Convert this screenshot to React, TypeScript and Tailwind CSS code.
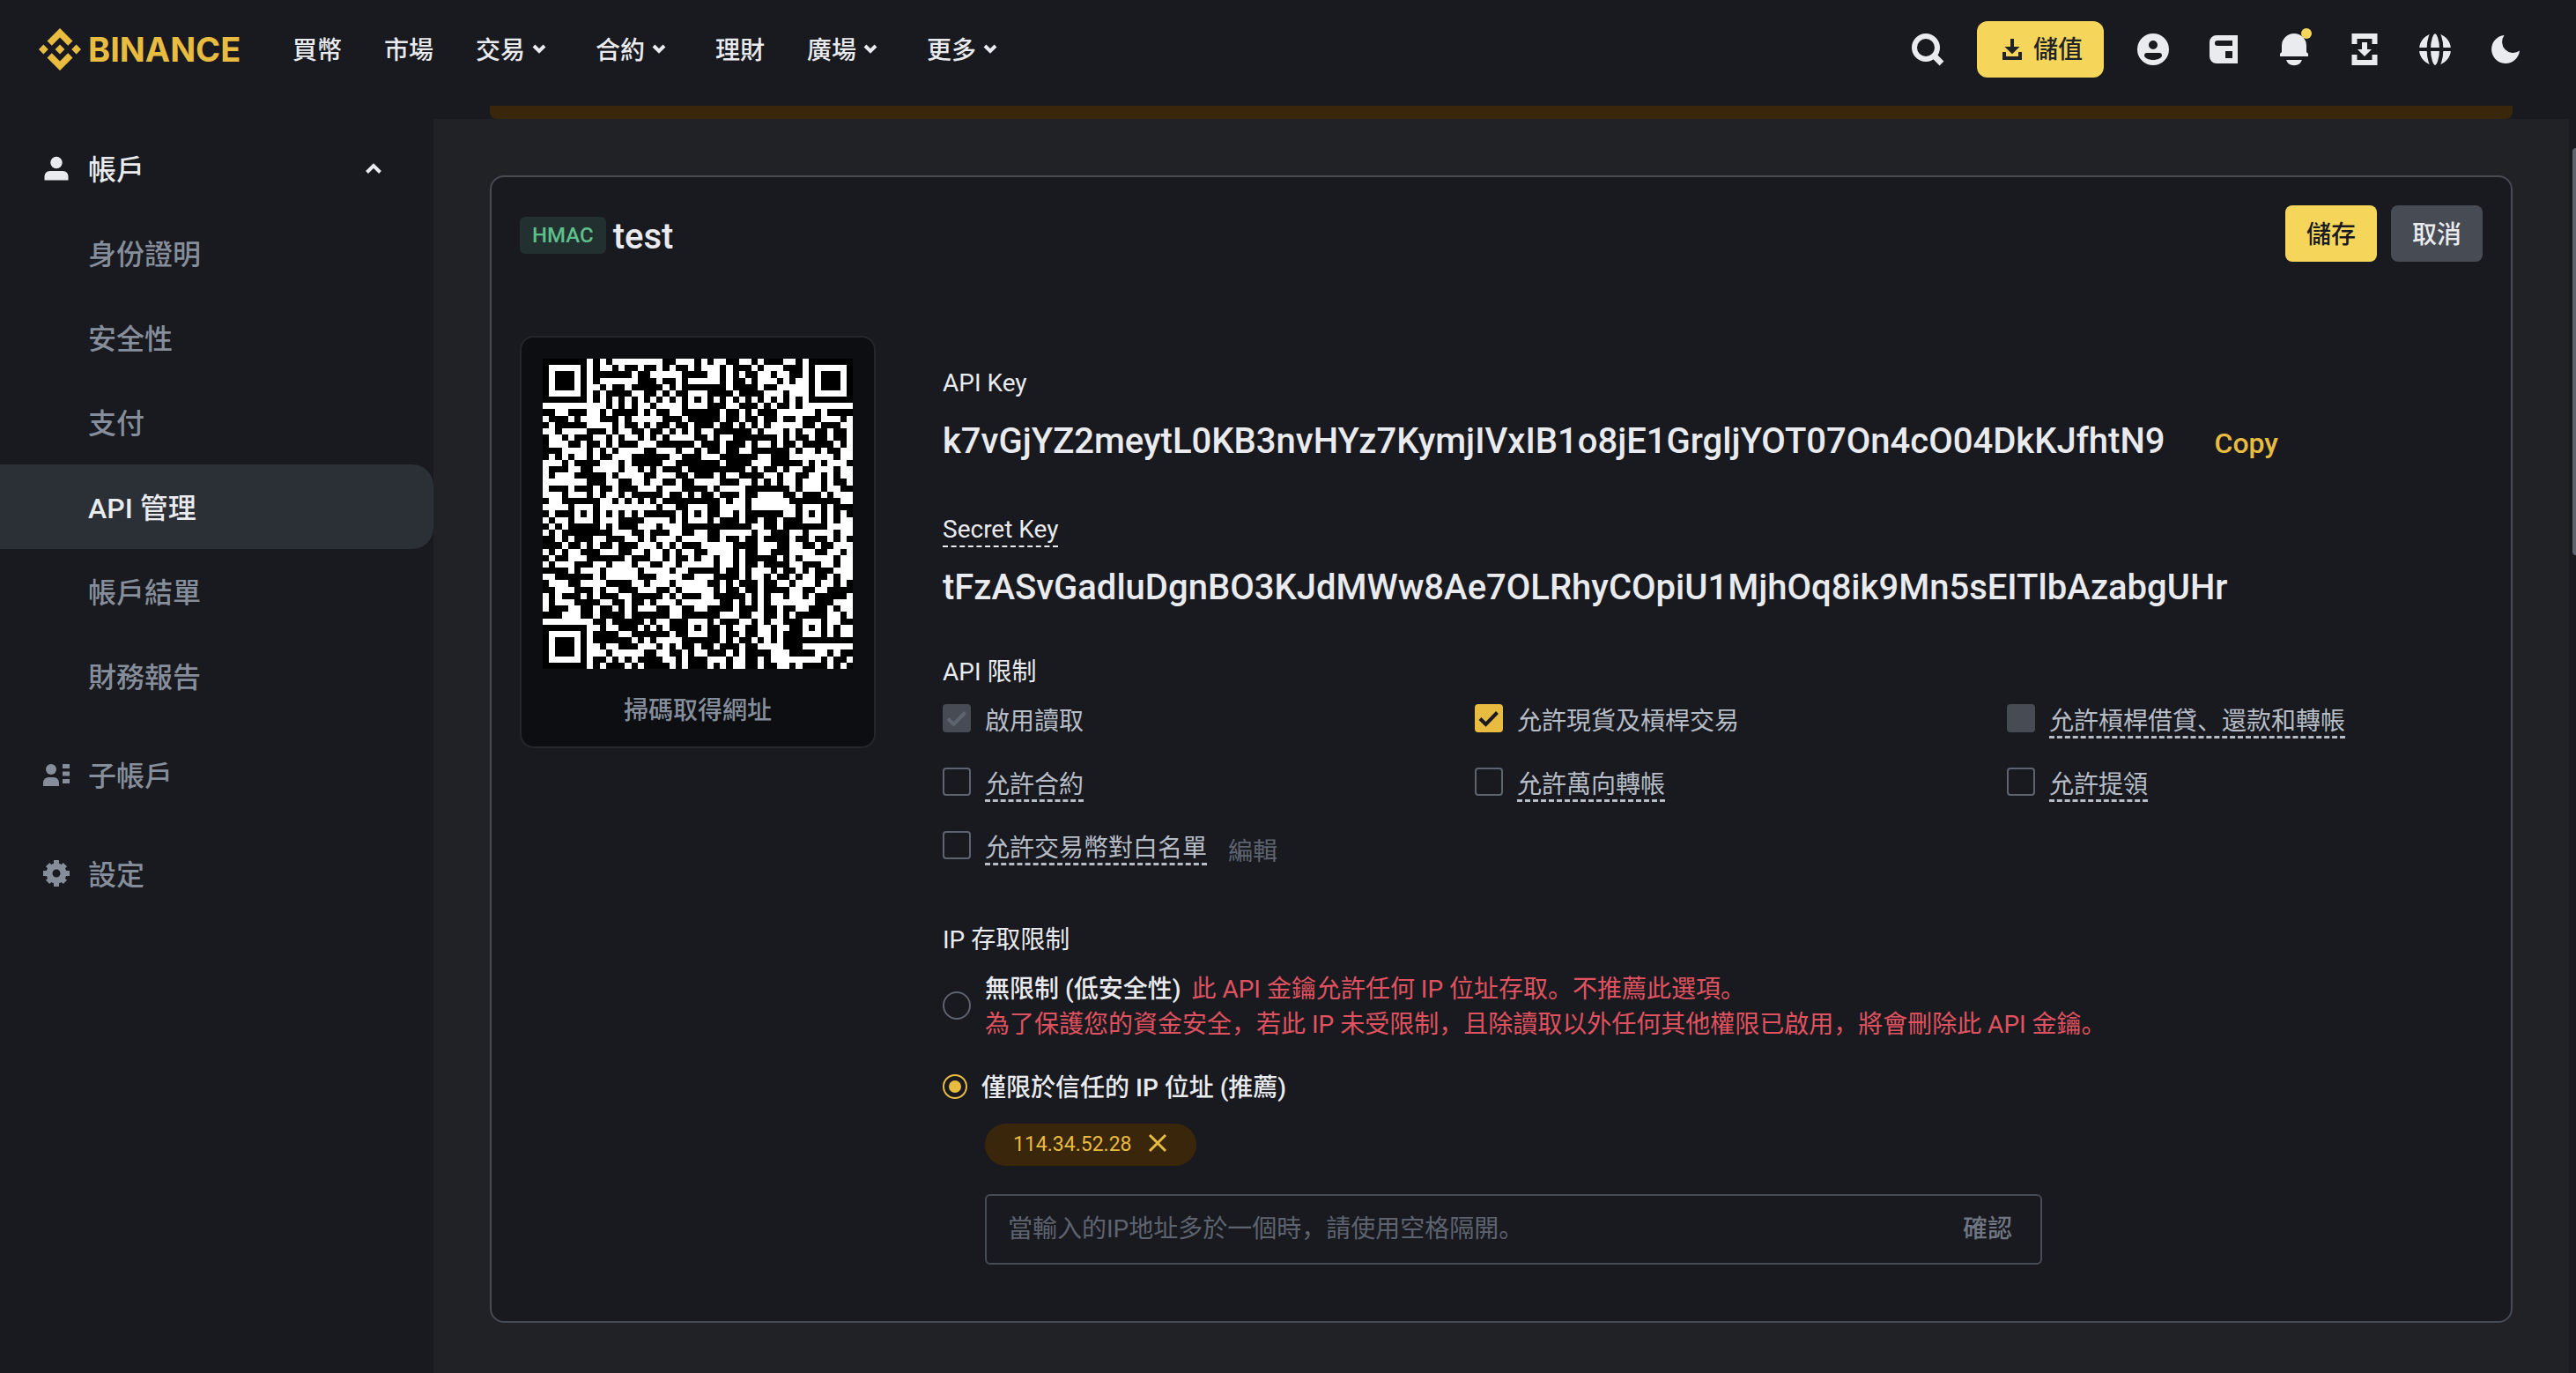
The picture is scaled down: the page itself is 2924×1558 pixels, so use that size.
import React from "react";

/* Each row lists the columns where the module colour flips, starting from black. */
const QR_SIZE = 49;
const QR_ROWS: number[][] = [
  [7, 8, 9, 10, 11, 19, 21, 24, 25, 26, 27, 29, 31, 33, 34, 35, 38, 40, 41, 42],
  [7, 8, 9, 11, 12, 13, 15, 16, 18, 19, 20, 21, 23, 24, 25, 28, 29, 30, 33, 34, 35, 38, 41, 42],
  [7, 8, 14, 15, 17, 22, 26, 28, 29, 30, 31, 32, 34, 36, 37, 39, 41, 42],
  [7, 8, 9, 15, 18, 19, 21, 22, 23, 28, 29, 30, 32, 33, 34, 37, 38, 39, 40, 42],
  [7, 9, 10, 11, 13, 14, 19, 20, 21, 22, 29, 30, 34, 35, 37, 42],
  [7, 8, 9, 10, 14, 16, 18, 19, 20, 21, 23, 26, 30, 31, 35, 38, 39, 42],
  [7, 8, 9, 10, 11, 12, 13, 14, 15, 16, 17, 18, 19, 20, 21, 22, 23, 24, 25, 26, 27, 28, 29, 30, 31, 32, 33, 34, 35, 36, 37, 38, 39, 40, 41, 42],
  [0, 10, 11, 12, 13, 14, 15, 17, 18, 22, 23, 26, 29, 31, 34, 35, 36, 37, 39, 40, 41, 49],
  [2, 4, 7, 9, 10, 11, 15, 16, 17, 18, 20, 22, 28, 29, 31, 32, 33, 34, 37, 43, 44, 45],
  [0, 1, 4, 5, 6, 9, 12, 13, 14, 19, 22, 23, 28, 29, 31, 32, 34, 35, 37, 38, 40, 41, 44, 47, 48, 49],
  [1, 2, 7, 11, 12, 13, 15, 16, 17, 18, 20, 21, 23, 24, 27, 28, 30, 31, 32, 33, 34, 35, 36, 41, 43, 44, 47, 49],
  [0, 2, 3, 7, 10, 11, 12, 14, 16, 17, 19, 20, 21, 22, 23, 24, 25, 27, 33, 34, 35, 38, 39, 40, 41, 43, 45, 46, 48, 49],
  [1, 3, 4, 5, 8, 10, 11, 12, 13, 15, 16, 17, 18, 19, 20, 24, 26, 27, 28, 30, 37, 38, 39, 40, 42, 43, 45, 46, 48, 49],
  [1, 4, 6, 7, 9, 10, 11, 12, 15, 18, 24, 25, 28, 29, 32, 33, 34, 36, 37, 38, 40, 41, 46, 47, 48, 49],
  [3, 7, 8, 9, 10, 11, 12, 16, 18, 21, 22, 24, 25, 26, 28, 29, 31, 33, 39, 40, 41, 43, 44, 45, 47, 49],
  [1, 2, 3, 4, 5, 7, 8, 9, 11, 14, 20, 22, 25, 28, 34, 36, 39, 46, 47, 49],
  [0, 3, 4, 5, 9, 12, 13, 14, 19, 21, 28, 29, 33, 36, 41, 42, 43, 44, 45, 48],
  [0, 1, 4, 6, 8, 12, 13, 15, 16, 17, 18, 19, 22, 23, 32, 33, 34, 35, 37, 38, 39, 41, 43, 46, 47, 49],
  [0, 1, 2, 5, 10, 11, 12, 16, 18, 21, 23, 24, 27, 28, 29, 31, 35, 37, 38, 40, 42, 44, 45, 46, 47, 49],
  [0, 7, 10, 12, 14, 16, 17, 19, 21, 22, 24, 28, 31, 33, 34, 35, 36, 37, 38, 40, 41, 44, 45, 46, 48, 49],
  [0, 1, 4, 5, 8, 9, 11, 12, 15, 18, 19, 22, 26, 27, 28, 32, 39, 40, 41, 44, 45, 47],
  [0, 3, 4, 7, 8, 9, 10, 12, 13, 14, 19, 20, 22, 23, 24, 25, 27, 28, 31, 32, 34, 38, 40, 41, 44, 45, 46, 49],
  [1, 3, 9, 11, 12, 13, 14, 15, 16, 17, 18, 19, 28, 29, 30, 32, 33, 39, 47, 49],
  [0, 4, 5, 8, 9, 18, 19, 21, 23, 26, 28, 32, 33, 40, 41, 44, 45, 46],
  [1, 2, 5, 6, 7, 8, 9, 10, 11, 12, 13, 14, 15, 16, 21, 22, 23, 24, 25, 26, 28, 30, 31, 32, 38, 40, 41, 42, 43, 44, 45, 46, 47, 48],
  [0, 1, 2, 4, 5, 8, 9, 12, 16, 20, 21, 22, 23, 26, 27, 28, 31, 32, 34, 35, 37, 38, 41, 44, 45, 46, 47, 49],
  [1, 2, 3, 4, 9, 10, 11, 12, 15, 18, 19, 22, 33, 35, 37, 38, 45, 49],
  [0, 1, 2, 3, 11, 14, 16, 17, 20, 22, 24, 26, 28, 33, 34, 36, 39, 41, 42, 46, 47, 49],
  [2, 3, 4, 5, 8, 10, 13, 15, 16, 17, 18, 21, 22, 26, 28, 29, 31, 32, 34, 35, 39, 40, 42, 43, 45, 46, 47, 48],
  [3, 4, 6, 7, 8, 9, 11, 12, 15, 18, 19, 20, 21, 22, 25, 30, 34, 37, 39, 41, 43, 44, 46, 49],
  [0, 1, 2, 3, 4, 6, 9, 12, 14, 16, 17, 19, 20, 21, 22, 24, 26, 30, 31, 32, 34, 36, 39, 43, 45, 47, 48, 49],
  [1, 2, 4, 7, 13, 14, 17, 19, 20, 21, 23, 24, 25, 27, 28, 30, 31, 32, 37, 38, 39, 40, 41, 46, 47, 49],
  [0, 1, 2, 5, 8, 10, 11, 14, 15, 17, 19, 21, 22, 27, 28, 30, 31, 32, 34, 35, 39, 41, 44, 46, 47, 49],
  [4, 5, 6, 9, 10, 15, 16, 20, 21, 23, 28, 29, 31, 32, 33, 36, 37, 38, 40, 41, 42, 43, 46, 49],
  [0, 2, 8, 9, 10, 15, 18, 22, 24, 27, 31, 32, 33, 35, 36, 37, 39, 40, 41, 43, 45, 46, 47, 49],
  [1, 4, 6, 10, 14, 16, 17, 20, 21, 26, 28, 29, 30, 31, 34, 35, 37, 39, 40, 43, 44, 46, 47, 48],
  [2, 5, 8, 9, 10, 12, 15, 18, 20, 21, 22, 27, 28, 29, 31, 32, 34, 35, 39, 41, 43, 45],
  [0, 1, 2, 3, 6, 7, 8, 9, 12, 14, 19, 20, 21, 22, 25, 27, 32, 33, 34, 35, 36, 38, 39, 41, 42, 43, 48, 49],
  [0, 1, 2, 5, 9, 11, 13, 14, 16, 17, 18, 21, 22, 28, 30, 31, 32, 33, 34, 35, 36, 43, 46, 49],
  [0, 1, 4, 6, 8, 9, 11, 12, 13, 14, 15, 18, 20, 22, 24, 26, 30, 31, 34, 35, 37, 38, 40, 42, 45, 46, 47, 49],
  [3, 6, 8, 9, 13, 14, 20, 22, 28, 31, 33, 35, 37, 38, 39, 40, 45, 47, 48, 49],
  [0, 8, 10, 11, 16, 17, 18, 20, 23, 26, 27, 28, 31, 33, 34, 35, 36, 38, 41, 44, 45, 47],
  [7, 9, 10, 12, 15, 16, 17, 18, 19, 20, 23, 24, 25, 26, 28, 29, 30, 32, 34, 36, 37, 39, 41, 42, 43, 44, 45, 46, 47, 49],
  [7, 8, 12, 14, 20, 21, 23, 26, 28, 29, 31, 32, 34, 36, 37, 38, 41, 44, 45, 46, 47, 49],
  [7, 8, 14, 15, 16, 17, 18, 22, 28, 29, 30, 31, 33, 34, 35, 36, 37, 38],
  [7, 9, 10, 12, 15, 18, 19, 20, 21, 22, 24, 25, 27, 28, 31, 32, 34, 38, 41, 49],
  [7, 10, 11, 16, 18, 20, 22, 23, 24, 26, 29, 30, 31, 32, 36, 39, 43, 45, 46, 47],
  [7, 8, 10, 11, 12, 13, 14, 15, 19, 21, 22, 23, 26, 29, 30, 32, 34, 35, 36, 44, 45, 46, 48, 49],
  [7, 8, 9, 10, 13, 14, 15, 16, 20, 21, 22, 23, 26, 27, 28, 29, 30, 32, 34, 35, 37, 39, 40, 41, 45, 46, 47, 48],
];

function QrCode() {
  const light = QR_ROWS.map((flips, y) => {
    let d = "";
    for (let i = 0; i < flips.length; i += 2) {
      const end = flips[i + 1] ?? QR_SIZE;
      d += `M${flips[i]} ${y}H${end}v1H${flips[i]}z`;
    }
    return d;
  }).join("");
  return (
    <svg viewBox="0 0 49 49" className="block w-full" shapeRendering="crispEdges" role="img" aria-label="QR code">
      <rect width="49" height="49" fill="#000" />
      <path d={light} fill="#fff" />
      {[[0, 0], [42, 0], [0, 42]].map(([x, y]) => (
        <g key={`${x}-${y}`}>
          <rect x={x} y={y} width="7" height="7" fill="#000" />
          <rect x={x + 1} y={y + 1} width="5" height="5" fill="#fff" />
          <rect x={x + 2} y={y + 2} width="3" height="3" fill="#000" />
        </g>
      ))}
    </svg>
  );
}

function Caret() {
  return (
    <svg viewBox="0 0 32 32" className="size-8" fill="none" stroke="currentColor" strokeWidth="4" aria-hidden="true">
      <path d="M10 12l6 6 6-6" />
    </svg>
  );
}

const NAV = [
  { label: "買幣" },
  { label: "市場" },
  { label: "交易", menu: true },
  { label: "合約", menu: true },
  { label: "理財" },
  { label: "廣場", menu: true },
  { label: "更多", menu: true },
];

function IconButton({ label, children }: { label: string; children: React.ReactNode }) {
  return (
    <button type="button" aria-label={label} className="size-12 shrink-0">
      <svg viewBox="0 0 24 24" className="size-12 overflow-visible" fill="currentColor" fillRule="evenodd" aria-hidden="true">
        {children}
      </svg>
    </button>
  );
}

function Header() {
  return (
    <header className="flex h-[120px] items-start justify-between pr-14 pl-11 text-[#eaebef]">
      <div className="flex h-28 items-center">
        <a href="#home" className="flex w-60 items-center gap-2 text-[#e8bb41]">
          <svg viewBox="0 0 48 48" className="size-12" fill="currentColor" aria-hidden="true">
            <path d="M24 0l14.5 14.5-5.3 5.3L24 10.6l-9.2 9.2-5.3-5.3z" />
            <path d="M24 48l14.5-14.5-5.3-5.3L24 37.4l-9.2-9.2-5.3 5.3z" />
            <path d="M5.4 18.6l5.4 5.4-5.4 5.4L0 24zM42.6 18.6L48 24l-5.4 5.4-5.4-5.4zM24 18.6l5.4 5.4-5.4 5.4-5.4-5.4z" />
          </svg>
          <span className="font-[Inter] text-[38px] leading-none font-bold">BINANCE</span>
        </a>
        <nav className="ml-12 flex items-center gap-12 text-[28px] leading-10 font-medium">
          {NAV.map((n) => (
            <a key={n.label} href="#nav" className="flex items-center whitespace-nowrap">
              <span className="pt-1">{n.label}</span>
              {n.menu && <Caret />}
            </a>
          ))}
        </nav>
      </div>
      <div className="flex h-28 items-center gap-8">
        <IconButton label="搜尋">
          <circle cx="11" cy="11" r="6.5" fill="none" stroke="currentColor" strokeWidth="3" />
          <path d="M15.6 15.6l4.4 4.4" stroke="currentColor" strokeWidth="3.4" />
        </IconButton>
        <button type="button" className="flex h-16 items-center gap-2 rounded-xl bg-[#f5d65a] px-6 text-[28px] font-medium text-[#202226]">
          <svg viewBox="0 0 32 32" className="size-8" fill="currentColor" aria-hidden="true">
            <path d="M14 4h4v9h6.5L16 21.3 7.5 13H14zM5 19h4v5h14v-5h4v9H5z" />
          </svg>
          <span className="pt-0.5">儲值</span>
        </button>
        <IconButton label="個人">
          <path d="M12 3a9 9 0 110 18 9 9 0 010-18zm0 4a2.5 2.5 0 100 5 2.5 2.5 0 000-5zm-3.5 7A1.5 1.5 0 007 15.5C7 16.9 9.5 18 12 18s5-1.1 5-2.5A1.5 1.5 0 0015.5 14z" />
        </IconButton>
        <IconButton label="錢包">
          <path d="M8 4h12v16H8a4 4 0 01-4-4V8a4 4 0 014-4zm.5 3A1.5 1.5 0 007 8.5 1.5 1.5 0 008.5 10H17V7zM13 13v4h4v-4z" />
        </IconButton>
        <IconButton label="通知">
          <path d="M12 3a7 7 0 017 7v3.500l1 1V16H4v-1.500l1-1V10a7 7 0 017-7zM7.500 18h9a4.800 4.800 0 01-9 0z" />
          <circle cx="19" cy="3" r="3" fill="#f5d65a" />
        </IconButton>
        <IconButton label="下載">
          <path d="M4.750 3h14.500v6h-3V6h-8.500v3h-3zM4.750 21h14.500v-6h-3v3h-8.500v-3h-3zM10.500 8h3v4H16l-4 4-4-4h2.500z" />
        </IconButton>
        <IconButton label="語言">
          <circle cx="12" cy="12" r="9" />
          <ellipse cx="12" cy="12" rx="3.6" ry="10" fill="none" stroke="#191a1f" strokeWidth="2.2" />
          <path d="M2 11h20v2H2z" fill="#191a1f" />
        </IconButton>
        <IconButton label="深色模式">
          <path d="M11.3 4A8 8 0 1020 12.8 6.25 6.25 0 0111.3 4z" />
        </IconButton>
      </div>
    </header>
  );
}

const ACCOUNT_LINKS = ["身份證明", "安全性", "支付", "API 管理", "帳戶結單", "財務報告"];

function Sidebar() {
  return (
    <aside className="w-[492px] shrink-0 pt-[23px] text-[32px] font-medium text-[#868e9b]">
      <button type="button" aria-expanded="true" className="flex h-24 w-full items-center pr-12 pl-11 text-[#eaebef]">
        <svg viewBox="0 0 40 40" className="mr-4 size-10" fill="currentColor" aria-hidden="true">
          <circle cx="20" cy="13.5" r="6.7" />
          <path d="M6.5 33.5V29a6 6 0 016-6h15a6 6 0 016 6v4.5z" />
        </svg>
        <span className="pt-1">帳戶</span>
        <svg viewBox="0 0 40 40" className="ml-auto size-10" fill="none" stroke="currentColor" strokeWidth="4" aria-hidden="true">
          <path d="M12.5 24.5l7.500-7.500 7.500 7.500" />
        </svg>
      </button>
      <ul>
        {ACCOUNT_LINKS.map((label) => (
          <li key={label}>
            <a
              href="#account"
              className={
                label === "API 管理"
                  ? "flex h-24 items-center rounded-r-3xl bg-[#2b2f36] pt-1 pl-[100px] text-[#eaebef]"
                  : "flex h-24 items-center pt-1 pl-[100px]"
              }
            >
              {label}
            </a>
          </li>
        ))}
      </ul>
      <a href="#sub" className="mt-4 flex h-24 items-center gap-4 pl-11">
        <svg viewBox="0 0 40 40" className="size-10" fill="currentColor" aria-hidden="true">
          <circle cx="14" cy="14" r="6" />
          <path d="M5 33v-4a6 6 0 016-6h6a6 6 0 016 6v4zM27 8h8v5h-8zM27 16.5h8v5h-8zM27 25h8v5h-8z" />
        </svg>
        <span className="pt-1">子帳戶</span>
      </a>
      <a href="#settings" className="mt-4 flex h-24 items-center gap-4 pl-11">
        <svg viewBox="0 0 40 40" className="size-10" fill="currentColor" aria-hidden="true">
          <circle cx="20" cy="20" r="8" fill="none" stroke="currentColor" strokeWidth="7" />
          <path d="M17 5h6v5h-6zM17 30h6v5h-6zM5 17h5v6H5zM30 17h5v6h-5z" />
          <path d="M17 6h6v5h-6zM17 29h6v5h-6zM6 17h5v6H6zM29 17h5v6h-5z" transform="rotate(45 20 20)" />
        </svg>
        <span className="pt-1">設定</span>
      </a>
    </aside>
  );
}

type Permission = { label: string; checked?: boolean; disabled?: boolean; hint?: boolean; edit?: boolean };

const PERMISSIONS: Permission[] = [
  { label: "啟用讀取", checked: true, disabled: true },
  { label: "允許現貨及槓桿交易", checked: true },
  { label: "允許槓桿借貸、還款和轉帳", disabled: true, hint: true },
  { label: "允許合約", hint: true },
  { label: "允許萬向轉帳", hint: true },
  { label: "允許提領", hint: true },
  { label: "允許交易幣對白名單", hint: true, edit: true },
];

function PermissionBox({ p }: { p: Permission }) {
  return (
    <div className="flex items-start gap-6">
      <label className="flex items-start gap-4 text-[28px] leading-8 whitespace-nowrap text-[#b7bdc6]">
        <span className="relative size-8 shrink-0">
          <input
            type="checkbox"
            defaultChecked={p.checked}
            disabled={p.disabled}
            className="peer block size-8 appearance-none rounded border-2 border-[#5e6370] checked:border-[#e8bb41] checked:bg-[#e8bb41] disabled:border-[#474b54] disabled:bg-[#474b54]"
          />
          <svg
            viewBox="0 0 32 32"
            className="pointer-events-none absolute inset-0 hidden size-8 text-[#191a1f] peer-checked:block peer-disabled:text-[#5e6370]"
            fill="none"
            stroke="currentColor"
            strokeWidth="4"
            aria-hidden="true"
          >
            <path d="M6 16.5l6.500 6.500L25.500 9.500" />
          </svg>
        </span>
        <span className={p.hint ? "border-b-3 border-dashed border-[#b7bdc6] pt-1" : "pt-1"}>{p.label}</span>
      </label>
      {p.edit && (
        <button type="button" className="pt-2 text-[28px] leading-8 text-[#5e6370]">
          編輯
        </button>
      )}
    </div>
  );
}

function ApiCard() {
  return (
    <section className="rounded-2xl border-2 border-[#474b54] bg-[#191a1f] p-8 pb-16">
      <div className="flex h-16 items-start justify-between">
        <div className="flex items-center gap-2 pt-2">
          <span className="rounded-md bg-[#22312f] px-3.5 text-2xl leading-[42px] font-medium text-[#5fbf8b]">HMAC</span>
          <h1 className="pt-1 text-[40px] leading-12 font-medium">test</h1>
        </div>
        <div className="flex gap-4 text-[28px] font-medium">
          <button type="button" className="h-16 rounded-lg bg-[#f5d65a] px-6 pt-1 text-[#191a1f]">儲存</button>
          <button type="button" className="h-16 rounded-lg bg-[#474b54] px-6 pt-1">取消</button>
        </div>
      </div>

      <div className="mt-[84px] flex items-start gap-[76px]">
        <figure className="w-[404px] shrink-0 rounded-2xl border-2 border-[#24272c] bg-[#0c0e12] px-6 pt-6 pb-5">
          <QrCode />
          <figcaption className="pt-7 text-center text-[28px] leading-10 font-medium text-[#868e9b]">掃碼取得網址</figcaption>
        </figure>

        <div className="min-w-0 flex-1 pt-[34px] text-[28px] leading-10">
          <h2>API Key</h2>
          <div className="mt-4 flex items-center gap-14 pt-0.5">
            <p className="text-[40px] leading-14 font-medium">k7vGjYZ2meytL0KB3nvHYz7KymjIVxIB1o8jE1GrgljYOT07On4cO04DkKJfhtN9</p>
            <button type="button" className="pt-1 text-[32px] font-medium text-[#e8bb41]">Copy</button>
          </div>
          <h2 className="mt-13">
            <span className="inline-block border-b-2 border-dashed border-[#eaebef] leading-9">Secret Key</span>
          </h2>
          <p className="mt-4 pt-0.5 text-[40px] leading-14 font-medium">tFzASvGadluDgnBO3KJdMWw8Ae7OLRhyCOpiU1MjhOq8ik9Mn5sEITlbAzabgUHr</p>

          <fieldset className="mt-12">
            <legend>API 限制</legend>
            <div className="mt-4 grid auto-rows-[40px] grid-cols-3 gap-x-16 gap-y-8">
              {PERMISSIONS.map((p) => (
                <PermissionBox key={p.label} p={p} />
              ))}
            </div>
          </fieldset>

          <fieldset className="mt-16">
            <legend>IP 存取限制</legend>
            <label className="mt-4 flex items-center gap-4">
              <input type="radio" name="ip" className="mb-1 size-8 shrink-0 appearance-none rounded-full border-2 border-[#5e6370]" />
              <span>
                <span className="font-medium">無限制 (低安全性)</span>
                <span className="ml-3 text-[#e0525f]">此 API 金鑰允許任何 IP 位址存取。不推薦此選項。</span>
                <span className="block text-[#e0525f]">為了保護您的資金安全，若此 IP 未受限制，且除讀取以外任何其他權限已啟用，將會刪除此 API 金鑰。</span>
              </span>
            </label>
            <label className="mt-8 flex items-center gap-4 font-medium">
              <span className="relative mb-1 size-7 shrink-0">
                <input type="radio" name="ip" defaultChecked className="peer block size-7 appearance-none rounded-full border-2 border-[#5e6370] checked:border-[#e8bb41]" />
                <span className="pointer-events-none absolute inset-[7px] hidden rounded-full bg-[#e8bb41] peer-checked:block" />
              </span>
              僅限於信任的 IP 位址 (推薦)
            </label>
            <div className="mt-5 ml-12 flex h-12 w-60 items-center justify-between rounded-full bg-[#3a260a] px-8 text-[23px] text-[#e8bb41]">
              <span>114.34.52.28</span>
              <button type="button" aria-label="移除" className="mb-1">
                <svg viewBox="0 0 24 24" className="block size-6" fill="none" stroke="currentColor" strokeWidth="3" aria-hidden="true">
                  <path d="M3 3l18 18M21 3L3 21" />
                </svg>
              </button>
            </div>
            <div className="mt-8 ml-12 flex h-20 max-w-[1200px] items-center rounded-md border-2 border-[#474b54] px-6">
              <input
                type="text"
                aria-label="IP"
                placeholder="當輸入的IP地址多於一個時，請使用空格隔開。"
                className="min-w-0 flex-1 bg-transparent placeholder:text-[#5e6370]"
              />
              <button type="button" className="px-2 font-medium text-[#6f7682]">確認</button>
            </div>
          </fieldset>
        </div>
      </div>
    </section>
  );
}

export default function App() {
  return (
    <div className="flex min-h-screen bg-[#191a1f] font-[Roboto,'Noto_Sans_CJK_SC',sans-serif] text-[#eaebef]">
      <div className="flex min-w-0 flex-1 flex-col">
        <Header />
        <div className="flex flex-1">
          <Sidebar />
          <div className="flex min-w-0 flex-1 flex-col pr-2">
            <div className="px-16">
              <div className="h-[15px] rounded-b-lg bg-[#3a260a]" />
            </div>
            <main className="flex-1 bg-[#202226] px-16 pt-16 pb-13">
              <ApiCard />
            </main>
          </div>
        </div>
      </div>
      <div className="fixed top-[168px] right-0 h-[462px] w-1 rounded-l bg-[#5e6370]" />
    </div>
  );
}
